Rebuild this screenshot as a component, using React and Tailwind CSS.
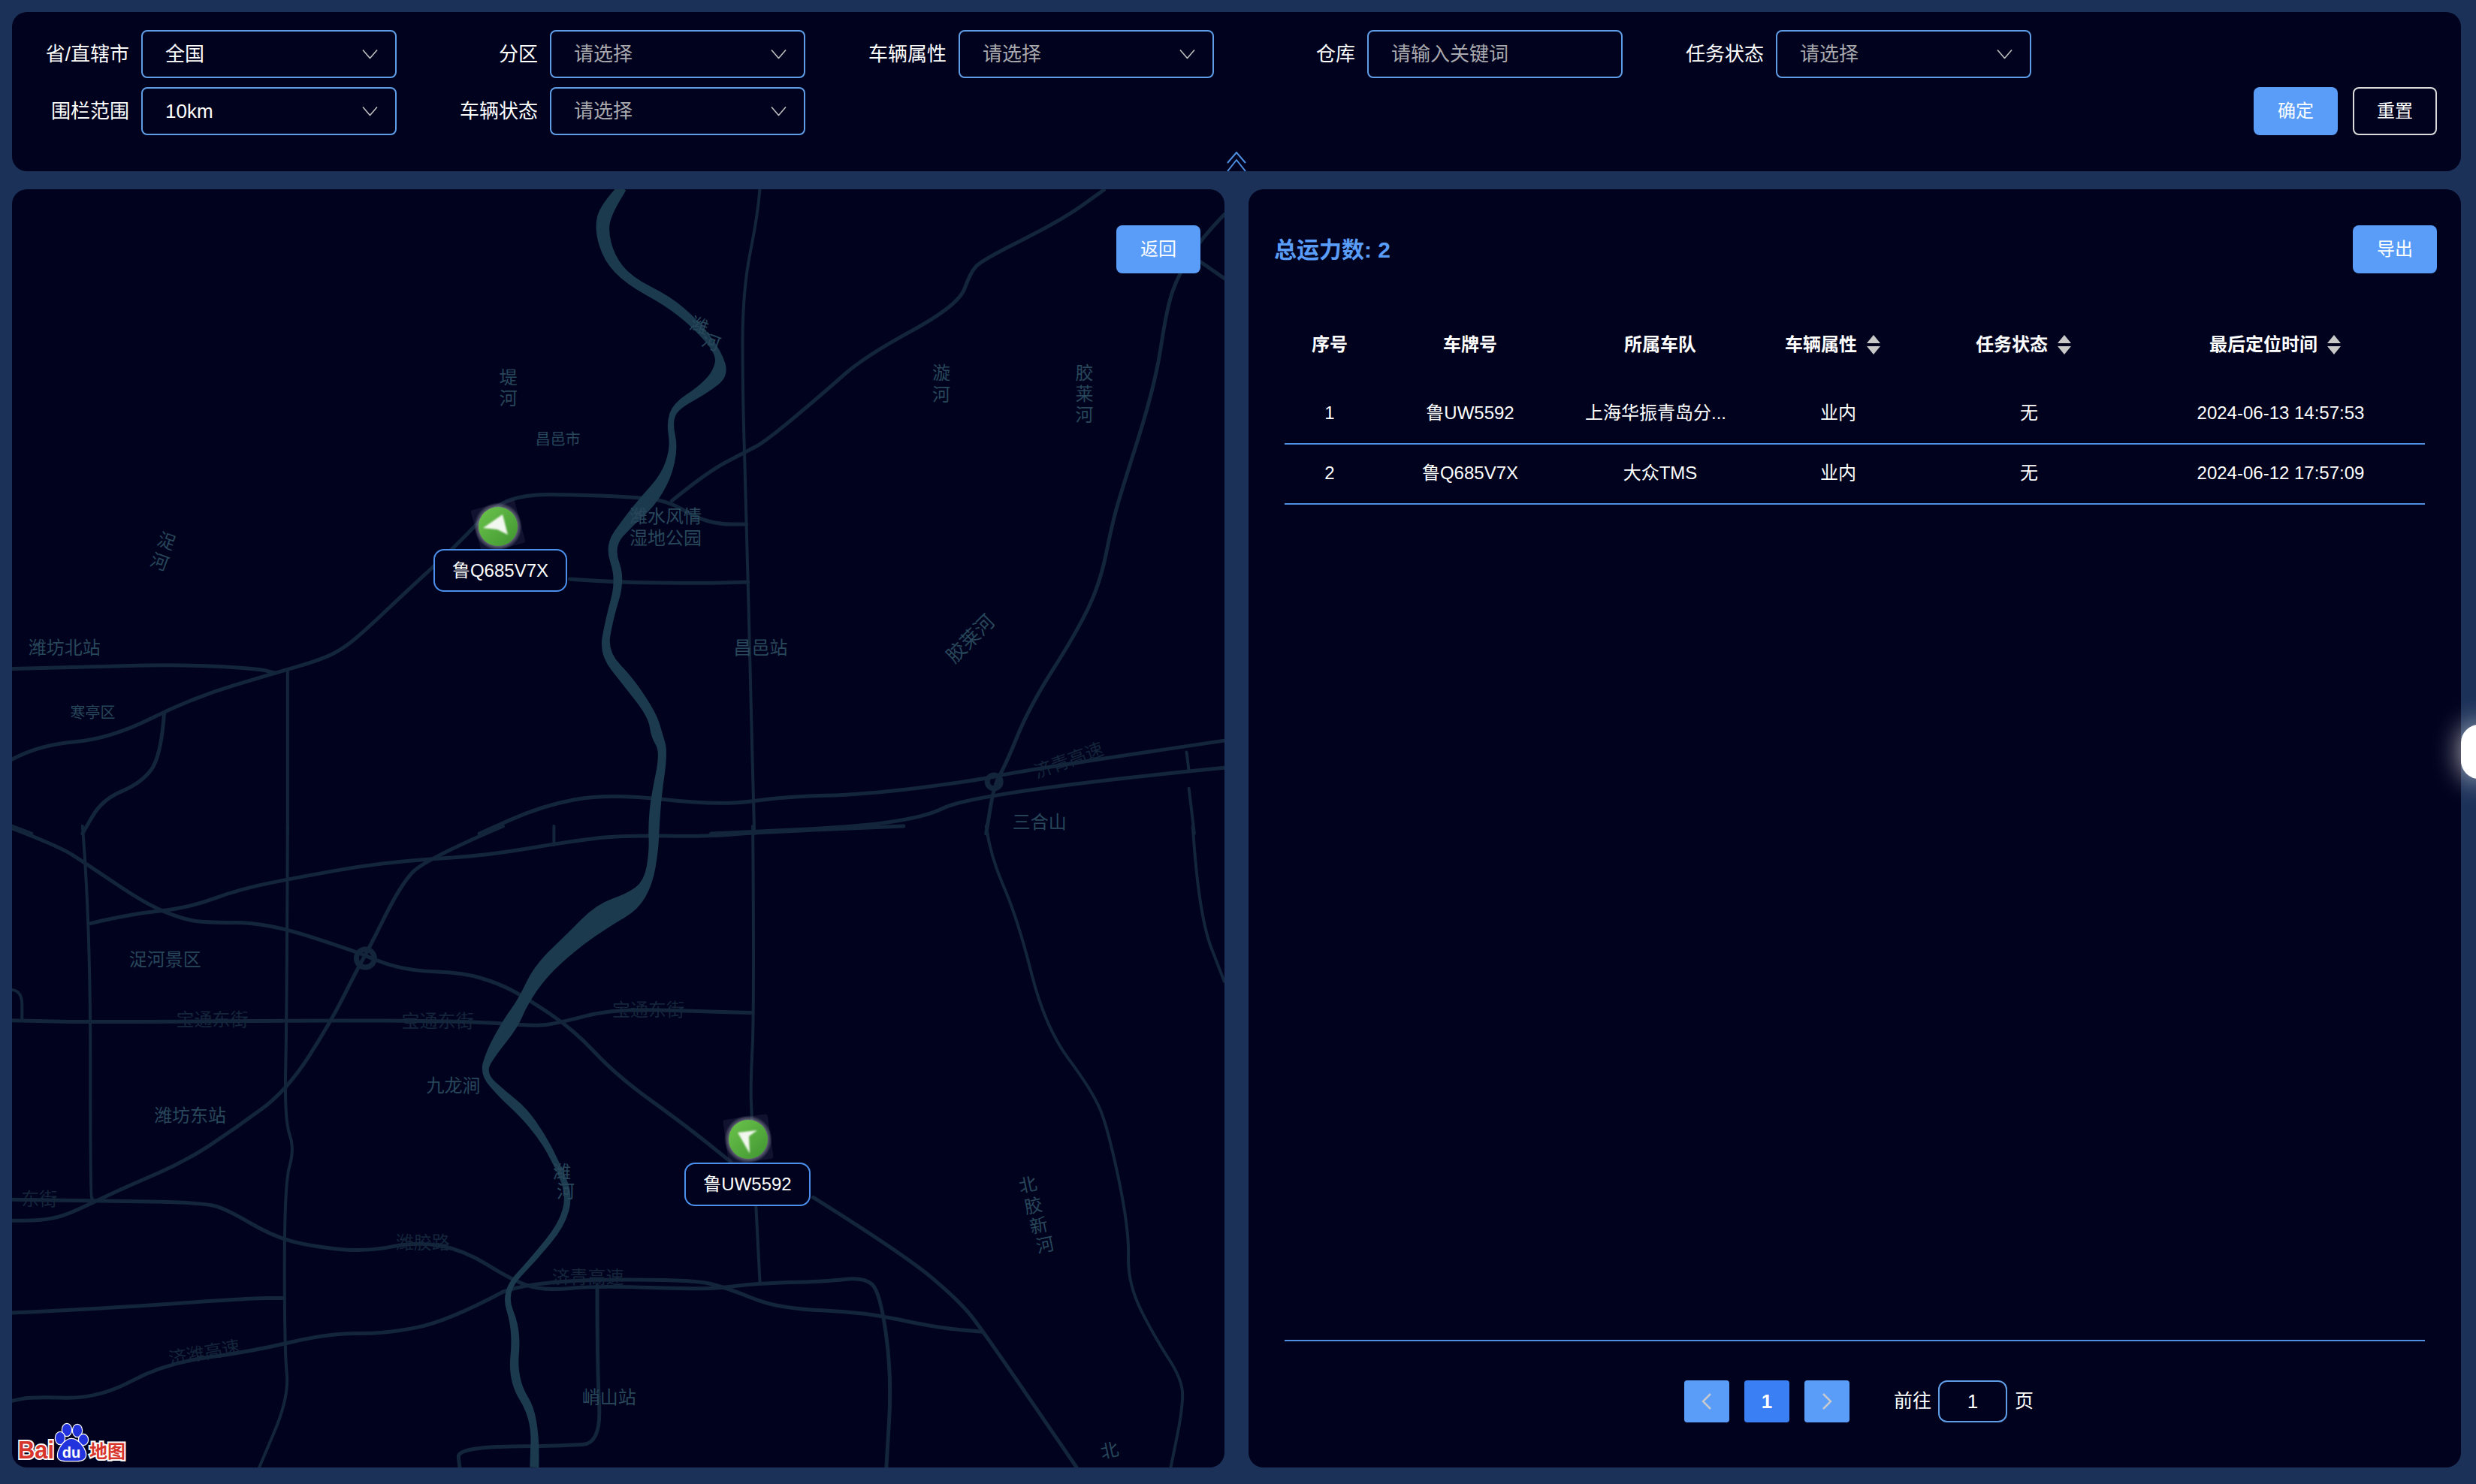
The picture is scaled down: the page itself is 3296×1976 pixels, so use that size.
const z10 = (pts) => pts.map(([x, y, w]) => [x * 1.046, 250 + y * 0.5485, w]);
const z11 = (pts) => pts.map(([x, y, w]) => [x * 1.046, 1100 + y * 0.5587, w]);

const smooth = (pts) => {
  let d = `M${pts[0][0].toFixed(1)} ${pts[0][1].toFixed(1)}`;
  for (let i = 1; i < pts.length - 1; i++) {
    const mx = (pts[i][0] + pts[i + 1][0]) / 2;
    const my = (pts[i][1] + pts[i + 1][1]) / 2;
    d += `Q${pts[i][0].toFixed(1)} ${pts[i][1].toFixed(1)} ${mx.toFixed(1)} ${my.toFixed(1)}`;
  }
  const l = pts[pts.length - 1];
  return d + `L${l[0].toFixed(1)} ${l[1].toFixed(1)}`;
};

const ribbon = (pts) => {
  const a = [];
  const b = [];
  pts.forEach((p, i) => {
    const q = pts[Math.max(i - 1, 0)];
    const r = pts[Math.min(i + 1, pts.length - 1)];
    const dx = r[0] - q[0];
    const dy = r[1] - q[1];
    const len = Math.hypot(dx, dy) || 1;
    const nx = (-dy / len) * (p[2] / 2);
    const ny = (dx / len) * (p[2] / 2);
    a.push([p[0] + nx, p[1] + ny]);
    b.unshift([p[0] - nx, p[1] - ny]);
  });
  return smooth(a) + smooth(b).replace("M", "L") + "Z";
};

const river = [
  ...z10([[792, 0, 12], [772, 50, 20], [765, 100, 18], [775, 170, 16], [800, 225, 12], [850, 275, 14], [885, 330, 12], [915, 400, 8], [918, 450, 22], [895, 490, 14], [860, 530, 10], [852, 570, 8], [858, 630, 10], [848, 700, 14], [825, 760, 22], [800, 810, 16], [775, 870, 12], [790, 950, 12], [775, 1050, 10], [768, 1130, 12], [800, 1200, 16], [830, 1280, 12], [836, 1330, 16], [845, 1370, 10], [835, 1480, 14]]),
  ...z11([[832, 0, 15], [832, 60, 12], [825, 135, 12], [805, 180, 26], [768, 212, 34], [728, 275, 24], [688, 345, 22], [665, 420, 14], [650, 470, 22], [625, 540, 14], [614, 590, 8], [640, 640, 12], [665, 680, 14], [690, 740, 10], [710, 810, 8], [725, 880, 9], [715, 950, 9], [680, 1030, 8], [640, 1110, 7], [658, 1200, 11], [652, 1320, 12], [682, 1410, 12], [680, 1528, 12]]),
];

const roads = [
  z10([[15, 1168], [85, 1165], [230, 1157], [330, 1168], [350, 1178]]),
  z10([[15, 1388], [50, 1352], [140, 1338], [245, 1238], [350, 1178], [410, 1145], [440, 1115], [470, 1065], [520, 975], [580, 870], [630, 770], [670, 745], [725, 745], [800, 750], [850, 760], [885, 800], [915, 817], [950, 817]]),
  z10([[855, 760], [900, 690], [950, 640], [975, 615], [1050, 495], [1100, 410], [1220, 285], [1235, 205], [1250, 175], [1350, 80], [1405, 5]]),
  z10([[725, 950], [780, 958], [900, 960], [952, 957]]),
  z10([[1558, 65], [1530, 120], [1500, 210], [1485, 290], [1470, 480], [1425, 750], [1415, 820], [1400, 960], [1370, 1080], [1310, 1260], [1280, 1400], [1265, 1450], [1255, 1568]]),
  z10([[1528, 180], [1558, 220]]),
  z10([[1558, 1342], [1300, 1415], [1240, 1440], [1100, 1473], [1000, 1478], [915, 1500], [775, 1470], [690, 1500], [610, 1568]]),
  z10([[1558, 1408], [1240, 1468], [1160, 1545], [905, 1568]]),
  z10([[209, 1275], [205, 1380], [180, 1445], [130, 1485], [105, 1568]]),
  z10([[15, 1550], [40, 1568]]),
  z11([[15, 5], [75, 48], [110, 90], [185, 185], [230, 220], [260, 230], [340, 230], [455, 300], [485, 325], [525, 345], [590, 350], [635, 375], [670, 410], [730, 485], [785, 595], [870, 710], [930, 800]]),
  z11([[1035, 885], [1150, 1020], [1220, 1130], [1250, 1200], [1370, 1528]]),
  z11([[115, 232], [165, 210], [240, 195], [305, 150], [385, 120], [460, 95], [530, 80], [620, 70], [730, 35], [790, 22], [900, 25], [960, 15], [1150, 0]]),
  z11([[640, 0], [540, 80], [510, 140], [470, 290], [455, 340], [420, 470], [365, 630], [300, 720], [235, 800], [160, 860], [115, 900], [80, 930], [50, 940], [15, 940]]),
  z11([[15, 463], [60, 465], [120, 467], [420, 463], [600, 465], [680, 477], [710, 470], [780, 435], [900, 442], [958, 445]]),
  z11([[15, 890], [120, 893], [260, 897], [290, 915], [345, 975], [390, 1000], [465, 1015], [530, 990], [590, 1010], [650, 1080], [690, 1108], [760, 1095], [900, 1105], [960, 1090], [1050, 1085], [1100, 1075], [1120, 1110], [1135, 1310], [1128, 1528]]),
  z11([[640, 1110], [680, 1082], [880, 1080], [925, 1100], [990, 1150], [1100, 1158], [1190, 1195], [1250, 1205]]),
  z11([[15, 1160], [130, 1150], [320, 1125], [360, 1125]]),
  z11([[640, 1110], [570, 1180], [490, 1210], [420, 1208], [320, 1252], [210, 1280], [125, 1365], [40, 1360], [15, 1370]]),
  z11([[760, 1095], [760, 1290], [765, 1470], [720, 1477], [582, 1480], [585, 1528]]),
];

const thinRoads = [
  z10([[967, 0], [965, 60], [945, 250], [945, 500], [950, 800], [955, 1200], [960, 1568]]),
  z11([[958, 0], [960, 440], [955, 620], [957, 700]]),
  z11([[962, 905], [967, 1085]]),
  z10([[366, 1172], [366, 1568]]),
  z11([[366, 0], [365, 460], [362, 700], [375, 770], [362, 850], [362, 1250], [368, 1360], [330, 1528]]),
  z11([[1255, 0], [1260, 70], [1295, 220], [1330, 480], [1390, 630], [1410, 720], [1437, 960], [1435, 1090], [1470, 1220], [1505, 1320], [1505, 1390], [1490, 1528]]),
  z10([[1510, 1370], [1513, 1415]]),
  z10([[1513, 1458], [1520, 1568]]),
  z11([[105, 0], [115, 230], [115, 880], [118, 890]]),
  z11([[15, 390], [28, 392], [28, 460]]),
  z11([[1518, 0], [1525, 210], [1558, 370]]),
  z11([[705, 0], [705, 45]]),
];

const L = (t, x, y, size = 24, rot = 0, faint = false) => ({ t, x, y, size, rot, faint });
const p10 = (x, y) => [x * 1.046, 250 + y * 0.5485];
const p11 = (x, y) => [x * 1.046, 1100 + y * 0.5587];

const labels = [
  L("堤", ...p10(647, 460)), L("河", ...p10(647, 512)),
  L("潍", ...p10(890, 335), 24, 20), L("河", ...p10(905, 375), 24, 20),
  L("昌邑市", ...p10(710, 610), 20),
  L("潍水风情", ...p10(847, 797)), L("湿地公园", ...p10(847, 850)),
  L("浞", ...p10(212, 858), 24, 20), L("河", ...p10(203, 908), 24, 20),
  L("潍坊北站", ...p10(82, 1117)), L("寒亭区", ...p10(118, 1275), 20), L("昌邑站", ...p10(968, 1117)),
  L("胶莱河", ...p10(1235, 1095), 26, -45),
  L("漩", ...p10(1198, 450)), L("河", ...p10(1198, 503)),
  L("胶", ...p10(1380, 450)), L("莱", ...p10(1380, 500)), L("河", ...p10(1380, 552)),
  L("三合山", ...p10(1323, 1540)),
  L("浞河景区", ...p11(210, 318)), L("九龙涧", ...p11(577, 618)), L("潍坊东站", ...p11(242, 690)),
  L("潍", ...p11(715, 825)), L("河", ...p11(720, 870)), L("峭山站", ...p11(775, 1362)),
  L("北", ...p11(1308, 855), 24, -12), L("胶", ...p11(1315, 905), 24, -12), L("新", ...p11(1322, 952), 24, -12), L("河", ...p11(1330, 998), 24, -12),
  L("北", ...p11(1412, 1488), 24, -12),
  L("宝通东街", ...p11(270, 460), 24, 0, true), L("宝通东街", ...p11(557, 465), 24, 0, true), L("宝通东街", ...p11(825, 437), 24, 0, true),
  L("济青高速", ...p11(748, 1075), 24, 0, true), L("潍胶路", ...p11(538, 992), 24, 0, true),
  L("济潍高速", ...p11(260, 1255), 24, -10, true), L("东街", ...p11(50, 888), 24, 0, true),
  L("济青高速", ...p10(1360, 1390), 24, -20, true),
];

function MapDrawing() {
  return (
    <svg className="absolute inset-0 w-full h-full" viewBox="16 252 1614 1702" fill="none">
      <defs>
        <linearGradient id="mk" x1="0" y1="0" x2="1" y2="1">
          <stop offset="0" stopColor="#6cc44c" />
          <stop offset="1" stopColor="#3f9530" />
        </linearGradient>
        <radialGradient id="glow">
          <stop offset="0.6" stopColor="#ffffff" stopOpacity="0.7" />
          <stop offset="1" stopColor="#ffffff" stopOpacity="0" />
        </radialGradient>
        <filter id="soft"><feGaussianBlur stdDeviation="1" /></filter>
      </defs>
      {roads.map((r, i) => <path key={i} d={smooth(r)} stroke="#13253b" strokeWidth="5" strokeLinecap="round" strokeLinejoin="round" />)}
      {thinRoads.map((r, i) => <path key={i} d={smooth(r)} stroke="#13253b" strokeWidth="4" strokeLinecap="round" strokeLinejoin="round" />)}
      <path d={ribbon(river)} fill="#1c3a4e" />
      <circle cx={p11(465, 315)[0]} cy={p11(465, 315)[1]} r="12" stroke="#13253b" strokeWidth="7" />
      <circle cx={p10(1265, 1442)[0]} cy={p10(1265, 1442)[1]} r="9" stroke="#13253b" strokeWidth="7" />
      {labels.map((l, i) => (
        <text key={i} x={l.x} y={l.y} fontSize={l.size} textAnchor="middle" dominantBaseline="central" fill={l.faint ? "#14253a" : "#28475a"} transform={l.rot ? `rotate(${l.rot} ${l.x} ${l.y})` : undefined}>{l.t}</text>
      ))}
      <g>
        <rect x="633" y="671" width="60" height="60" rx="3" fill="#2a2a4c" opacity="0.4" transform="rotate(-15 663 701)" />
        <circle cx="663" cy="701" r="32" fill="url(#glow)" />
        <circle cx="663" cy="701" r="26" fill="url(#mk)" />
        <path d="M643 703 L669 685 L676 712 L662 705 Z" fill="#f2f7ef" filter="url(#soft)" />
      </g>
      <g>
        <rect x="966" y="1487" width="60" height="60" rx="3" fill="#2a2a4c" opacity="0.4" transform="rotate(-8 996 1517)" />
        <circle cx="996" cy="1517" r="32" fill="url(#glow)" />
        <circle cx="996" cy="1517" r="26" fill="url(#mk)" />
        <path d="M998 1536 L982 1508 L1008 1505 L997 1513 Z" fill="#f2f7ef" filter="url(#soft)" />
      </g>
      <g>
        <text x="24" y="1942" fontSize="34" fontWeight="700" fill="#d8352a" stroke="#ffffff" strokeWidth="4" paintOrder="stroke" textLength="48" lengthAdjust="spacingAndGlyphs">Bai</text>
        <g fill="#2233dd" stroke="#ffffff" strokeWidth="2.5" paintOrder="stroke">
          <ellipse cx="89" cy="1904" rx="6" ry="8" />
          <ellipse cx="103" cy="1905" rx="6" ry="8" />
          <ellipse cx="80" cy="1915" rx="6" ry="8" />
          <ellipse cx="111" cy="1917" rx="6" ry="7" />
          <path d="M95 1916 C104 1916 115 1930 114 1938 C113 1946 104 1945 95 1945 C86 1945 77 1946 77 1938 C77 1930 86 1916 95 1916Z" />
        </g>
        <text x="95" y="1941" fontSize="20" fontWeight="700" textAnchor="middle" fill="#ffffff">du</text>
        <text x="119" y="1941" fontSize="24" fontWeight="700" fill="#d8352a" stroke="#ffffff" strokeWidth="4" paintOrder="stroke">地图</text>
      </g>
    </svg>
  );
}

const Chevron = () => (
  <svg className="absolute right-[23px] top-1/2 -translate-y-1/2 w-[21px] h-[13px]" viewBox="0 0 21 13" fill="none">
    <path d="M1 1 L10.5 12 L20 1" stroke="#bdbdbd" strokeWidth="1.6" />
  </svg>
);

function Field({ label, value, placeholder, select = true, className = "" }) {
  return (
    <div className={`flex justify-end items-center gap-4 ${className}`}>
      <span className="text-[26px] leading-none text-white whitespace-nowrap">{label}</span>
      <div className="relative w-[340px] h-16 rounded-lg border-2 border-[#5f9de6] pl-[30px] flex items-center">
        <span className={`text-[26px] leading-none ${value ? "text-white" : "text-[#a8a8ad]"}`}>{value || placeholder}</span>
        {select && <Chevron />}
      </div>
    </div>
  );
}

const btnPrimary = "flex items-center justify-center w-28 h-16 rounded-lg bg-[#5a9df8] text-white text-[24px]";

const Caret = () => (
  <svg className="w-[20px] h-[26px]" viewBox="0 0 20 26">
    <path d="M10 0 L19 11 L1 11 Z M10 26 L19 15 L1 15 Z" fill="#c8c8c8" />
  </svg>
);

const cols = "grid grid-cols-[120px_254px_252px_222px_286px_384px]";
const rows = [
  ["1", "鲁UW5592", "上海华振青岛分...", "业内", "无", "2024-06-13 14:57:53"],
  ["2", "鲁Q685V7X", "大众TMS", "业内", "无", "2024-06-12 17:57:09"],
];
const heads = [["序号"], ["车牌号"], ["所属车队"], ["车辆属性", 1], ["任务状态", 1], ["最后定位时间", 1]];

export default function App() {
  return (
    <div className="relative w-[3296px] h-[1976px] overflow-hidden bg-[#1c3158] pt-4 pb-[22px] pl-4 pr-5 flex flex-col gap-6 [font-family:'Liberation_Sans','Noto_Sans_CJK_SC',sans-serif]">
      <div className="relative h-[212px] shrink-0 rounded-[20px] bg-[#00021e] pt-6">
        <div className="grid grid-cols-[512px_repeat(4,544px)_1fr] gap-y-3">
          <Field label="省/直辖市" value="全国" />
          <Field label="分区" placeholder="请选择" />
          <Field label="车辆属性" placeholder="请选择" />
          <Field label="仓库" placeholder="请输入关键词" select={false} />
          <Field label="任务状态" placeholder="请选择" />
          <div />
          <Field label="围栏范围" value="10km" />
          <Field label="车辆状态" placeholder="请选择" />
          <div className="col-start-6 flex justify-end gap-5 pr-8">
            <div className={btnPrimary}>确定</div>
            <div className="flex items-center justify-center w-28 h-16 rounded-lg border-2 border-[#dcdcdc] text-white text-[24px]">重置</div>
          </div>
        </div>
        <svg className="absolute left-[1617px] bottom-0 w-[26px] h-[26px]" viewBox="0 0 26 26" fill="none">
          <path d="M1 15 L13 1 L25 15 M1 26 L13 11 L25 26" stroke="#4f8fe0" strokeWidth="2" />
        </svg>
      </div>

      <div className="flex-1 flex gap-8 min-h-0">
        <div className="relative flex-1 rounded-[20px] bg-[#00021e] overflow-hidden">
          <MapDrawing />
          <div className={`absolute left-[1470px] top-12 ${btnPrimary}`}>返回</div>
          <div className="absolute left-[561px] top-[479px] w-[178px] h-[57px] rounded-[14px] border-2 border-[#4a90ec] bg-[#00021e] flex items-center justify-center text-[24px] text-white">鲁Q685V7X</div>
          <div className="absolute left-[895px] top-[1296px] w-[168px] h-[58px] rounded-[14px] border-2 border-[#4a90ec] bg-[#00021e] flex items-center justify-center text-[24px] text-white">鲁UW5592</div>
        </div>

        <div className="flex-1 rounded-[20px] bg-[#00021e] flex flex-col">
          <div className="flex items-center justify-between h-16 mt-12 pl-[34px] pr-8 shrink-0">
            <span className="text-[30px] font-bold text-[#5a9df8]">总运力数: 2</span>
            <div className={btnPrimary}>导出</div>
          </div>
          <div className="flex-1 mx-12 mt-11 border-b-2 border-[#4f8fe0] min-h-0">
            <div className={`${cols} h-[104px] pb-[2px] items-center text-[24px] font-bold text-white`}>
              {heads.map(([t, sort]) => (
                <div key={t} className={`flex items-center justify-center gap-3 ${sort ? "pr-[14px]" : ""}`}>
                  <span>{t}</span>
                  {sort && <Caret />}
                </div>
              ))}
            </div>
            {rows.map((r) => (
              <div key={r[0]} className={`${cols} h-20 pb-[2px] items-center border-b-2 border-[#4f8fe0] text-[24px] text-white`}>
                {r.map((c, i) => (
                  <div key={i} className={`text-center whitespace-nowrap ${c.endsWith("...") ? "pr-[12px]" : ""}`}>{c}</div>
                ))}
              </div>
            ))}
          </div>
          <div className="h-[168px] shrink-0 pt-[52px] pl-[580px] flex items-start">
            <div className="flex items-center justify-center w-[60px] h-14 rounded bg-[#5a9df8]">
              <svg className="w-[14px] h-[24px]" viewBox="0 0 14 24" fill="none"><path d="M12 2 L2 12 L12 22" stroke="#c6c9cf" strokeWidth="2.5" /></svg>
            </div>
            <div className="flex items-center justify-center w-[60px] h-14 rounded bg-[#3b7ff5] ml-5 text-white text-[26px] font-bold">1</div>
            <div className="flex items-center justify-center w-[60px] h-14 rounded bg-[#5a9df8] ml-5">
              <svg className="w-[14px] h-[24px]" viewBox="0 0 14 24" fill="none"><path d="M2 2 L12 12 L2 22" stroke="#c6c9cf" strokeWidth="2.5" /></svg>
            </div>
            <div className="flex items-center h-14 ml-[59px] text-[25px] text-white">
              <span>前往</span>
              <div className="flex items-center justify-center w-[92px] h-14 rounded-xl border-2 border-[#5f9de6] ml-[9px] mr-[10px] text-[26px]">1</div>
              <span>页</span>
            </div>
          </div>
        </div>
      </div>

      <div className="absolute left-[3276px] top-[965px] w-10 h-[72px] rounded-l-[24px] bg-white shadow-[0_0_36px_rgba(255,255,255,0.75)]" />
    </div>
  );
}
